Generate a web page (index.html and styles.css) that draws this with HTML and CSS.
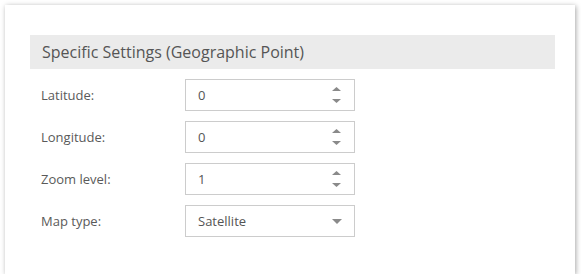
FILE: index.html
```html
<!DOCTYPE html>
<html>
<head>
<meta charset="utf-8">
<link rel="stylesheet" href="styles.css">
</head>
<body>
<div class="card">
  <div class="section-title">Specific Settings (Geographic Point)</div>
  <div class="form">
    <div class="row">
      <div class="label">Latitude:</div>
      <div class="field">
        <span class="value">0</span>
        <span class="spinner">
          <svg width="9" height="4" viewBox="0 0 9 4"><path d="M4.5 0L9 4H0Z"/></svg>
          <svg width="9" height="4" viewBox="0 0 9 4"><path d="M0 0H9L4.5 4Z"/></svg>
        </span>
      </div>
    </div>
    <div class="row">
      <div class="label">Longitude:</div>
      <div class="field">
        <span class="value">0</span>
        <span class="spinner">
          <svg width="9" height="4" viewBox="0 0 9 4"><path d="M4.5 0L9 4H0Z"/></svg>
          <svg width="9" height="4" viewBox="0 0 9 4"><path d="M0 0H9L4.5 4Z"/></svg>
        </span>
      </div>
    </div>
    <div class="row">
      <div class="label">Zoom level:</div>
      <div class="field">
        <span class="value">1</span>
        <span class="spinner">
          <svg width="9" height="4" viewBox="0 0 9 4"><path d="M4.5 0L9 4H0Z"/></svg>
          <svg width="9" height="4" viewBox="0 0 9 4"><path d="M0 0H9L4.5 4Z"/></svg>
        </span>
      </div>
    </div>
    <div class="row">
      <div class="label">Map type:</div>
      <div class="field">
        <span class="value">Satellite</span>
        <span class="caret">
          <svg width="10" height="5" viewBox="0 0 10 5"><path d="M0 0H10L5 5Z"/></svg>
        </span>
      </div>
    </div>
  </div>
</div>
</body>
</html>
```

FILE: styles.css
```css
html, body {
  margin: 0;
  padding: 0;
  background: #ffffff;
}
body {
  font-family: "Open Sans", "Noto Sans", sans-serif;
  color: #555555;
}
.card {
  margin: 5px 0 0 5px;
  width: 570px;
  height: 269px;
  box-sizing: border-box;
  padding: 30px 20px 0 25px;
  background: #ffffff;
  box-shadow: 1px 1px 5px rgba(0, 0, 0, 0.35);
}
.section-title {
  height: 34px;
  line-height: 34px;
  background: #ebebeb;
  padding-left: 12px;
  font-size: 16px;
  color: #555555;
}
.form {
  display: flex;
  flex-direction: column;
  gap: 10px;
  margin-top: 10px;
}
.row {
  display: flex;
  align-items: center;
}
.label {
  width: 155px;
  box-sizing: border-box;
  padding-left: 11px;
  font-size: 13px;
  color: #5a5a5a;
}
.field {
  width: 170px;
  height: 32px;
  box-sizing: border-box;
  border: 1px solid #cccccc;
  display: flex;
  align-items: center;
  justify-content: space-between;
  padding: 0 13px 0 12px;
  font-size: 13px;
  color: #555555;
}
.spinner {
  display: flex;
  flex-direction: column;
  gap: 8px;
  fill: #8a8a8a;
}
.spinner svg, .caret svg {
  display: block;
}
.caret {
  fill: #8a8a8a;
  display: flex;
  margin-right: -1px;
}
```
